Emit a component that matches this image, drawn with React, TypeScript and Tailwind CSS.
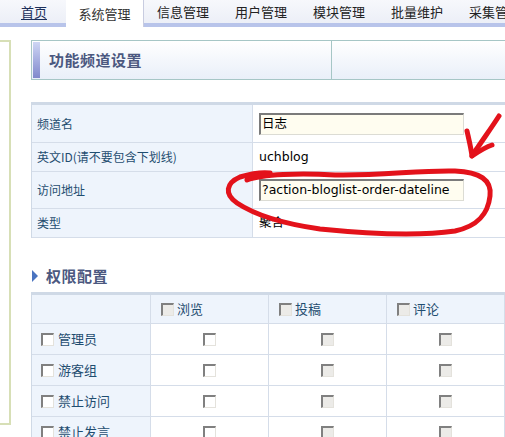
import React from 'react';

const cjk = { fontFamily: '"Noto Sans CJK SC", "Liberation Sans", sans-serif' };
const latin = { fontFamily: '"DejaVu Sans", "Noto Sans CJK SC", sans-serif', fontSize: 12.5 };

const tabs = ['首页', '系统管理', '信息管理', '用户管理', '模块管理', '批量维护', '采集管理'];

const Box = ({ grey = false }: { grey?: boolean }) => (
  <span
    className={`inline-block w-[13px] h-[13px] border-t-2 border-l-2 border-r border-b border-t-[#808080] border-l-[#808080] border-r-[#e4e2dc] border-b-[#e4e2dc] ${grey ? 'bg-[#ecebe8]' : 'bg-white'}`}
  />
);

const TabBar = () => (
  <div className="flex h-[27px] bg-gradient-to-b from-[#f7f8fc] to-[#eceff7] border-b-4 border-[#b8c4ea] text-[13px] text-[#222]">
    {tabs.map((t, i) => (
      <div
        key={t}
        className={`flex items-center justify-center shrink-0 ${i === 0 ? 'w-[66px] pl-[2px]' : 'w-[78px]'} ${
          i === 1 ? 'bg-white h-[27px] border-r border-[#c8cce0] text-[#333]' : 'h-[23px]'
        }`}
      >
        <span className={i === 0 ? 'underline underline-offset-2 text-[#1c2f5a]' : ''}>{t}</span>
      </div>
    ))}
  </div>
);

const formRows = [
  { label: '频道名', value: '日志', input: true, h: 'h-[38px]' },
  { label: '英文ID(请不要包含下划线)', value: 'uchblog', input: false, h: 'h-[29px]' },
  { label: '访问地址', value: '?action-bloglist-order-dateline', input: true, h: 'h-[37px]' },
  { label: '类型', value: '聚合', input: false, h: 'h-[29px]' },
];

const groups = ['管理员', '游客组', '禁止访问', '禁止发言'];
const perms = ['浏览', '投稿', '评论'];

// hand-drawn red marks over the form
const Annotation = () => (
  <svg className="absolute left-0 top-0 pointer-events-none" width="505" height="437" viewBox="0 0 505 437">
    <g fill="none" stroke="#e3121b" strokeWidth="5" strokeLinecap="round" strokeLinejoin="round">
      <path d="M247 180 C 262 174, 300 173, 335 175 C 380 176, 420 170, 455 171 C 480 172, 492 180, 490 196 C 488 214, 478 226, 455 231 C 420 236, 370 234, 320 229 C 285 224, 255 215, 237 203 C 224 194, 226 183, 240 177 C 250 174, 262 172, 270 173" />
      <path d="M499 116 C 492 127, 484 138, 478 147 C 475 151, 473 154, 472 156" />
      <path d="M467 131 C 469 140, 471 148, 472 156 C 478 152, 486 147, 492 145" />
    </g>
  </svg>
);

export default function App() {
  return (
    <div className="relative w-[505px] h-[437px] overflow-hidden bg-white" style={cjk}>
      <TabBar />
      <div className="flex">
        {/* left side panel */}
        <div className="w-[11px] h-[385px] mt-[13px] border-t-2 border-r-2 border-b-2 border-[#d7dfb6] shrink-0" />

        <div className="ml-[20px] w-[540px] shrink-0 pt-[13px]">
          {/* page header */}
          <div className="flex h-[40px] border border-[#a6c6c6] bg-gradient-to-b from-white to-[#e9eff9]">
            <div className="w-[300px] flex items-center border-r border-[#a6c6c6] pl-[1px] py-[1px]">
              <div className="w-[7px] h-full bg-gradient-to-b from-[#cfd6f4] to-[#8189cc]" />
              <span className="ml-[9px] text-[15px] font-bold text-[#4b5880] tracking-[0.5px]">功能频道设置</span>
            </div>
            <div className="flex-1" />
          </div>

          {/* channel form */}
          <div className="mt-[22px] border-t-[3px] border-[#8db3bb] border-l border-[#cfd9e6] text-[12px]">
            {formRows.map((r) => (
              <div key={r.label} className={`flex ${r.h} border-b border-[#d5dde9]`}>
                <div className="w-[221px] bg-[#eef4fc] flex items-center pl-[5px] text-[#1f4d70] border-r border-[#d5dde9]">
                  {r.label}
                </div>
                <div className="flex-1 flex items-center pl-[6px] text-black">
                  {r.input ? (
                    <div
                      className="w-[205px] h-[22px] flex items-center pl-[1px] bg-[#fffdf0] border-t-2 border-l-2 border-r border-b border-t-[#7b7b7b] border-l-[#7b7b7b] border-r-[#dcdcd4] border-b-[#dcdcd4]"
                      style={latin}
                    >
                      {r.value}
                    </div>
                  ) : (
                    <span style={latin}>{r.value}</span>
                  )}
                </div>
              </div>
            ))}
          </div>

          {/* permissions */}
          <div className="mt-[27px] flex items-center h-[22px]">
            <span className="w-0 h-0 border-y-[6px] border-y-transparent border-l-[6px] border-l-[#4a74c0] ml-[1px]" />
            <span className="ml-[8px] text-[15px] font-bold text-[#4b5880] tracking-[0.5px]">权限配置</span>
          </div>

          <div className="mt-[5px] border-t-[3px] border-[#8eb2c8] border-l border-[#cfd9e6] text-[13px] text-[#1f4d70]">
            <div className="flex h-[29px] bg-[#eef4fc] border-b border-[#d5dde9]">
              <div className="w-[119px] border-r border-[#d5dde9]" />
              {perms.map((p) => (
                <div key={p} className="w-[118px] flex items-center pl-[10px] gap-[3px] border-r border-[#d5dde9]">
                  <Box grey />
                  <span>{p}</span>
                </div>
              ))}
            </div>
            {groups.map((g) => (
              <div key={g} className="flex h-[31px] border-b border-[#d5dde9]">
                <div className="w-[119px] bg-[#eef4fc] flex items-center pl-[9px] gap-[4px] border-r border-[#d5dde9]">
                  <Box />
                  <span>{g}</span>
                </div>
                {perms.map((p, i) => (
                  <div key={p} className="w-[118px] flex items-center justify-center border-r border-[#d5dde9]">
                    <Box grey={i > 0} />
                  </div>
                ))}
              </div>
            ))}
          </div>
        </div>
      </div>
      <Annotation />
    </div>
  );
}
